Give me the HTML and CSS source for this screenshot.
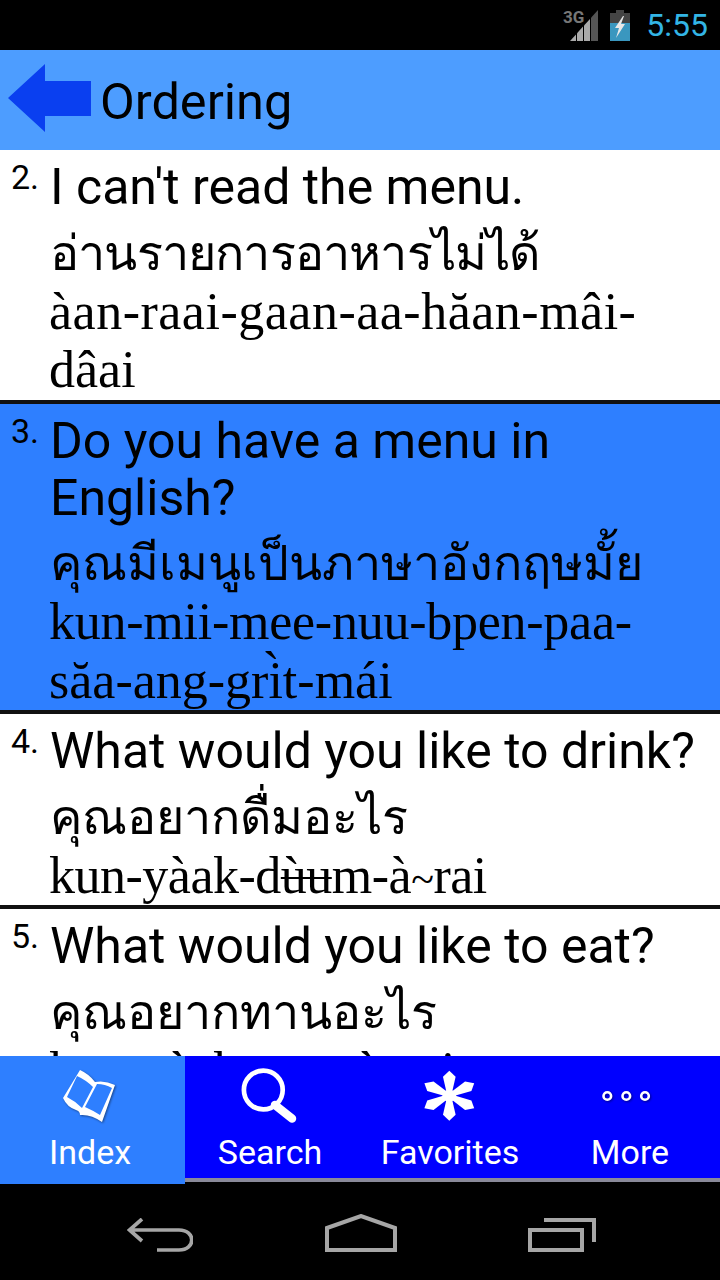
FILE: index.html
```html
<!DOCTYPE html>
<html lang="en">
<head>
<meta charset="utf-8">
<title>Ordering</title>
<link rel="stylesheet" href="styles.css">
</head>
<body>
<div class="screen">
  <div class="status">
    <svg class="sig" width="36" height="37" viewBox="0 -6 36 37">
      <text x="1" y="13" class="g3">3G</text>
      <path d="M8 31 H14 V24.4 Z" fill="#aaa"/>
      <path d="M15 31 H21 V16.6 L15 23.2 Z" fill="#aaa"/>
      <path d="M22 31 H28 V8.9 L22 15.5 Z" fill="#aaa"/>
      <path d="M29 31 H36 V0 L29 7.7 Z" fill="#555"/>
    </svg>
    <svg class="bat" width="20" height="31" viewBox="0 0 20 31">
      <path d="M6 0 H14 V3 H20 V31 H0 V3 H6 Z" fill="#444"/>
      <path d="M0 13 H20 V31 H0 Z" fill="#3a97bf"/>
      <path d="M13 6 L5 18 H9 L6 28 L15 14 H11 L14 6 Z" fill="#e8e8e8"/>
    </svg>
    <span class="clock">5:55</span>
  </div>
  <header class="title">
    <svg class="back" width="84" height="70" viewBox="0 0 84 70">
      <path d="M0 34 L37 0 V17 H83 V52 H37 V68 Z" fill="#0a3ff0"/>
    </svg>
    <h1>Ordering</h1>
  </header>
  <main class="list">
    <div class="item">
      <div class="num">2.</div>
      <div class="body">
        <div class="en">I can't read the menu.</div>
        <div class="th narrow">อ่านรายการอาหารไม่ได้</div>
        <div class="ro"><span class="wide">àan-raai-gaan-aa-hăan-mâi-</span>dâai</div>
      </div>
    </div>
    <div class="item sel">
      <div class="num">3.</div>
      <div class="body">
        <div class="en">Do you have a menu in English?</div>
        <div class="th">คุณมีเมนูเป็นภาษาอังกฤษมั้ย</div>
        <div class="ro"><span class="tight">kun-mii-mee-nuu-bpen-paa-</span>săa-ang-gri&#x200C;&#x0300;t-mái</div>
      </div>
    </div>
    <div class="item">
      <div class="num">4.</div>
      <div class="body">
        <div class="en">What would you like to drink?</div>
        <div class="th">คุณอยากดื่มอะไร</div>
        <div class="ro"><span class="tighter">kun-yàak-d<span class="bar">ùu</span>m-à<span class="tilde">~</span>rai</span></div>
      </div>
    </div>
    <div class="item">
      <div class="num">5.</div>
      <div class="body">
        <div class="en">What would you like to eat?</div>
        <div class="th">คุณอยากทานอะไร</div>
        <div class="ro"><span class="tighter">kun-yàak-taan-à<span class="tilde">~</span>rai</span></div>
      </div>
    </div>
  </main>
  <nav class="tabs">
    <div class="tab on">
      <svg class="ico shadow" width="64" height="64" viewBox="0 0 64 64">
        <path d="M5 34 L22 6 Q31 10 37 18 Q47 16 57 21 L44 58 Q33 50 22 51 Q22 47 18 46 Q9 43 5 34 Z" fill="#fff"/>
        <path d="M9 33 L19 12 Q28 16 35 23 L24 44 Q17 37 9 33 Z M39 20 Q47 20 54 24 L42 51 Q34 46 27 43 Z" fill="#2e7fff"/>
      </svg>
      <span>Index</span>
    </div>
    <div class="tab">
      <svg class="ico" width="64" height="64" viewBox="0 0 64 64">
        <circle cx="25.3" cy="26" r="19.4" fill="none" stroke="#fff" stroke-width="4.7"/>
        <path d="M37 41 L54 54.5" stroke="#fff" stroke-width="8.5" stroke-linecap="round"/>
      </svg>
      <span>Search</span>
    </div>
    <div class="tab">
      <svg class="ico" width="64" height="64" viewBox="0 0 64 64">
        <g transform="translate(31.3 31.7) scale(1.15 1)" fill="#fff">
          <circle r="6"/>
          <path d="M-2.5 -4 L-5.5 -19 L0 -25 L5.5 -19 L2.5 -4 Z"/>
          <path transform="rotate(60)" d="M-2.5 -4 L-5.5 -19 L0 -25 L5.5 -19 L2.5 -4 Z"/>
          <path transform="rotate(120)" d="M-2.5 -4 L-5.5 -19 L0 -25 L5.5 -19 L2.5 -4 Z"/>
          <path transform="rotate(180)" d="M-2.5 -4 L-5.5 -19 L0 -25 L5.5 -19 L2.5 -4 Z"/>
          <path transform="rotate(240)" d="M-2.5 -4 L-5.5 -19 L0 -25 L5.5 -19 L2.5 -4 Z"/>
          <path transform="rotate(300)" d="M-2.5 -4 L-5.5 -19 L0 -25 L5.5 -19 L2.5 -4 Z"/>
        </g>
      </svg>
      <span>Favorites</span>
    </div>
    <div class="tab">
      <svg class="ico shadow" width="64" height="64" viewBox="0 0 64 64">
        <circle cx="9.3" cy="32" r="3.8" fill="none" stroke="#fff" stroke-width="2.6"/>
        <circle cx="28.3" cy="32" r="3.8" fill="none" stroke="#fff" stroke-width="2.6"/>
        <circle cx="47" cy="32" r="3.8" fill="none" stroke="#fff" stroke-width="2.6"/>
      </svg>
      <span>More</span>
    </div>
  </nav>
  <footer class="sysnav">
    <svg width="66" height="34" viewBox="0 0 66 34" fill="none" stroke="#a6a6a6" stroke-width="3.7">
      <path d="M15 1 L2.5 12 L15 23 M2.5 12 H52 C69 12 69 32 52 32 H30"/>
    </svg>
    <svg width="72" height="38" viewBox="0 0 72 38" fill="none" stroke="#a6a6a6" stroke-width="4">
      <path d="M2 14 L36 2 L70 14 V36 H2 Z"/>
    </svg>
    <svg width="68" height="34" viewBox="0 0 68 34" fill="none" stroke="#a6a6a6" stroke-width="4">
      <path d="M2 12 H54 V32 H2 Z M16 2 H66 V24"/>
    </svg>
  </footer>
</div>
</body>
</html>
```
FILE: styles.css
```css
* { box-sizing: border-box; }
html, body { margin: 0; padding: 0; background: #000; }
.screen { width: 720px; height: 1280px; display: flex; flex-direction: column; overflow: hidden; font-family: Roboto, sans-serif; }
.status { height: 50px; flex: none; background: #000; display: flex; align-items: center; justify-content: flex-end; padding-right: 12px; }
.sig { margin-right: 12px; margin-top: -6px; }
.bat { margin-right: 16px; }
.g3 { font: bold 17px Roboto, sans-serif; fill: #777; }
.clock { color: #33b5e5; font-size: 32px; line-height: 52px; }
.title { height: 100px; flex: none; background: #4d9dff; display: flex; align-items: center; padding-left: 8px; gap: 8px; }
.back { filter: blur(0.7px); margin-top: -2px; }
.title h1 { margin: 0; font-size: 50.5px; font-weight: 400; color: #000; line-height: 1; padding-top: 4px; }
.list { height: 906px; flex: none; overflow: hidden; background: #fff; }
.item { display: flex; background: #fff; border-bottom: 4px solid #111; color: #000; }
.item.sel { background: #2e7fff; }
.num { width: 50px; flex: none; padding: 8px 0 0 11px; font-size: 34px; line-height: 38px; }
.body { flex: 1; padding: 9px 20px 0 0; }
.en { font-size: 50px; line-height: 57px; }
.th { font-size: 48.5px; line-height: 58px; padding-top: 8.5px; font-family: Roboto, "Noto Sans", "DejaVu Sans", sans-serif; }
.th.narrow { letter-spacing: -0.8px; }
.ro { font-family: "Liberation Serif", serif; font-size: 52px; line-height: 58.5px; margin-left: -1px; }
.wide { letter-spacing: 0.5px; }
.tight { letter-spacing: -0.25px; }
.tighter { letter-spacing: -0.5px; }
.bar { text-decoration: line-through; text-decoration-thickness: 2px; }
.tilde { font-size: 42px; line-height: 0; }
.tabs { height: 128px; flex: none; display: grid; grid-template-columns: repeat(4, 180px); background: #0000ff; box-shadow: inset 0 -2px 0 #000, inset 0 -6px 0 #8a8a9a; }
.tab { display: flex; flex-direction: column; align-items: center; color: #fff; font-size: 34px; line-height: 40px; padding-top: 8px; }
.ico { display: block; flex: none; }
.shadow { filter: drop-shadow(1px 1px 1px rgba(0, 0, 0, 0.45)); }
.tab span { margin-top: 4px; }
.tab.on { background: #2e7fff; box-shadow: 5px 0 0 #2e7fff; }
.sysnav { height: 96px; flex: none; background: #000; display: flex; align-items: flex-end; justify-content: space-between; padding: 0 124px 28px 127px; }
```
